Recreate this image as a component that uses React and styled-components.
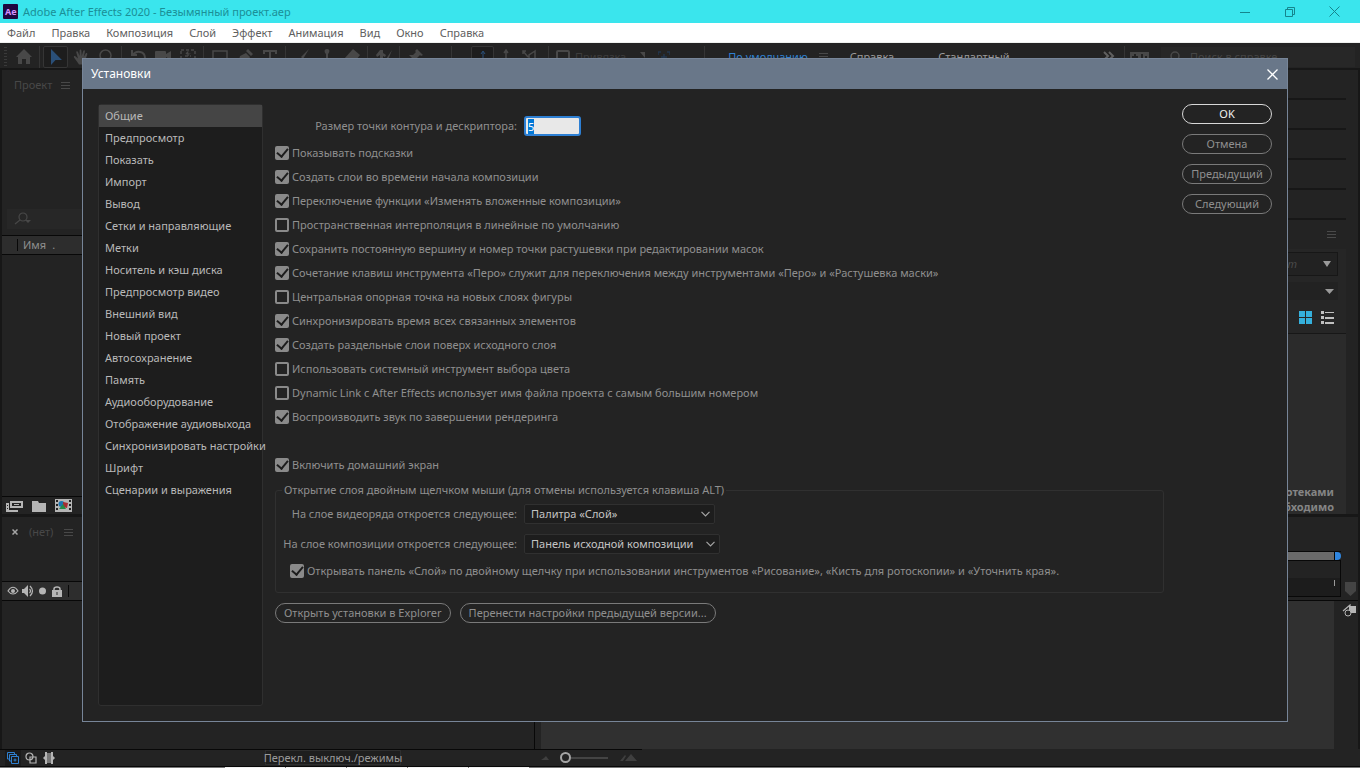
import React, { useEffect, useRef } from 'react';
import styled, { createGlobalStyle } from 'styled-components';

const GlobalStyle = createGlobalStyle`
  * {
    box-sizing: border-box;
  }
  body {
    margin: 0;
    background: #232323;
    color: #8f8f8f;
    font-family: "Noto Sans", "Open Sans", sans-serif;
    font-size: 11px;
    line-height: 16px;
  }
  button, input, select {
    font: inherit;
    color: inherit;
    margin: 0;
  }
  svg {
    display: block;
    flex: none;
  }
`;

const Page = styled.div`
  position: relative;
  display: flex;
  flex-direction: column;
  min-height: 100vh;
  overflow: hidden;
`;

/* window chrome */

const TitleBar = styled.header`
  display: flex;
  align-items: center;
  height: 23px;
  padding-left: 3px;
  background: #3ae5ed;
  color: #1b8f97;
`;

const WindowTitle = styled.span`
  flex: 1;
  padding-left: 5px;
`;

const WindowButton = styled.button`
  display: flex;
  align-items: center;
  justify-content: center;
  width: 45px;
  height: 20px;
  padding: 0;
  border: 0;
  background: none;
  color: ${props => props.$light ? '#fff' : '#15858d'};
`;

const MenuBar = styled.nav`
  display: flex;
  height: 20px;
  padding-left: 7px;
  gap: 16px;
  border-bottom: 1px solid #eef0ee;
  background: #fff;
  line-height: 20px;
  a {
    color: #606060;
    text-decoration: none;
  }
`;

/* toolbar */

const ToolBar = styled.div`
  display: flex;
  align-items: center;
  height: 25px;
  padding-top: 2px;
  flex: none;
  color: #484848;
  white-space: nowrap;
`;

const Grip = styled.div`
  width: 3px;
  height: 20px;
  margin: 0 4px 0 4px;
  background: repeating-linear-gradient(#3a3a3a 0 1px, #232323 1px 3px);
`;

const Tool = styled.button`
  display: flex;
  align-items: center;
  justify-content: center;
  flex: none;
  width: ${props => props.$narrow ? 23 : 25}px;
  height: 22px;
  padding: 0;
  border: 1px solid ${props => props.$on ? '#353535' : 'transparent'};
  border-radius: 2px;
  background: ${props => props.$on ? '#1d1d1d' : 'none'};
  color: ${props => props.$blue ? '#2a4f78' : 'inherit'};
`;

const Sep = styled.i`
  flex: none;
  width: 1px;
  height: 22px;
  margin: 0 3px;
  background: #353535;
`;

const Gap = styled.div`
  flex: none;
  width: ${props => props.$w}px;
`;

const SnapLabel = styled.label`
  display: flex;
  align-items: center;
  gap: 5px;
  padding: 0 12px 0 4px;
  color: #3c3c3c;
  input {
    appearance: none;
    width: 14px;
    height: 14px;
    border: 2px solid #484848;
    border-radius: 2px;
  }
`;

const Workspaces = styled.nav`
  flex: 1;
  display: flex;
  align-items: center;
  padding-left: 20px;
`;

const Workspace = styled.a`
  color: ${props => props.$on ? '#2f80d0' : '#9a9a9a'};
  text-decoration: none;
`;

const HelpSearch = styled.label`
  display: flex;
  align-items: center;
  gap: 10px;
  width: 194px;
  height: 20px;
  margin: 0 5px 0 12px;
  padding-left: 9px;
  background: #272727;
  input {
    width: 140px;
    padding: 0;
    border: 0;
    background: none;
  }
  input::placeholder {
    color: #444;
    opacity: 1;
  }
`;

/* panels */

const Upper = styled.div`
  display: flex;
  justify-content: space-between;
  height: 449px;
  border: solid #171717;
  border-width: 2px 2px 3px;
`;

const Project = styled.section`
  display: flex;
  flex-direction: column;
  width: 533px;
`;

const PanelTab = styled.div`
  display: flex;
  align-items: center;
  gap: ${props => props.$gap || 9}px;
  height: 30px;
  padding-left: ${props => props.$left}px;
  color: #484848;
`;

const CloseTab = styled.button`
  display: flex;
  padding: 0;
  border: 0;
  background: none;
  color: #a5a5a5;
`;

const ProjectSearch = styled.div`
  display: flex;
  align-items: center;
  height: 20px;
  margin: 109px 0 6px 5px;
  padding-left: 7px;
  background: #272727;
  color: #484848;
`;

const ColumnHead = styled.div`
  display: flex;
  align-items: center;
  height: 20px;
  border: solid #080808;
  border-width: 1px 0;
  background: #2d2d2d;
  padding-left: ${props => props.$left}px;
`;

const ColumnLine = styled.i`
  width: 1px;
  height: 12px;
  background: #080808;
  margin-right: 5px;
`;

const IconBar = styled.div`
  display: flex;
  align-items: center;
  gap: 9px;
  height: 18px;
  margin-top: auto;
  padding-left: 3px;
  border-top: 1px solid #080808;
  color: #b5b5b5;
`;

const Side = styled.aside`
  display: flex;
  flex-direction: column;
  width: 272px;
  padding-right: 12px;
`;

const Collapsed = styled.div`
  height: 30px;
  border-bottom: 2px solid #171717;
`;

const SideHead = styled.div`
  display: flex;
  justify-content: flex-end;
  align-items: center;
  height: 29px;
  padding-right: 10px;
  color: #4a4a4a;
`;

const LibraryTools = styled.div`
  display: flex;
  flex-direction: column;
  gap: 6px;
  height: 84px;
  padding: 3px 8px 0 0;
  background: #262626;
`;

const LibraryBox = styled.div`
  display: flex;
  align-items: center;
  justify-content: flex-end;
  gap: 26px;
  height: ${props => props.$framed ? 24 : 18}px;
  padding-right: ${props => props.$framed ? 6 : 4}px;
  border: ${props => props.$framed ? '1px solid #171717' : '0'};
  background: #222;
  color: #4a4a4a;
`;

const ViewIcons = styled.div`
  display: flex;
  justify-content: flex-end;
  align-items: center;
  gap: 8px;
  padding: 5px 3px 0 0;
`;

const LibraryText = styled.div`
  flex: 1;
  display: flex;
  flex-direction: column;
  justify-content: flex-end;
  border-top: 1px solid #171717;
  background: #2b2b2b;
  padding: 0 12px 0 0;
  line-height: 15px;
  font-weight: bold;
  text-align: right;
  color: #858585;
`;

const Timeline = styled.div`
  flex: 1;
  display: flex;
  border: solid #171717;
  border-width: 0 2px;
`;

const Layers = styled.section`
  display: flex;
  flex-direction: column;
  width: 533px;
  border-right: 1px solid #080808;
`;

const LayerIcons = styled.div`
  display: flex;
  align-items: center;
  gap: 3px;
  color: #b5b5b5;
  padding-right: 6px;
`;

const Tracks = styled.section`
  flex: 1;
  display: flex;
  flex-direction: column;
  padding-left: 6px;
`;

const WorkArea = styled.div`
  display: flex;
  height: 10px;
  margin: 34px 17px 0 0;
  border: solid #080808;
  border-width: 1px 0;
  background: linear-gradient(to left, #232323 6px, #6a6a6a 6px);
  justify-content: flex-end;
  i {
    width: 7px;
    border-left: 1px solid #080808;
    border-radius: 0 5px 5px 0;
    background: #2f86e0;
  }
`;

const Ruler = styled.div`
  display: flex;
  justify-content: flex-end;
  align-items: flex-end;
  gap: 4px;
  height: 40px;
  padding-right: 2px;
  border-bottom: 1px solid #080808;
  span {
    flex: 1;
    display: flex;
    justify-content: flex-end;
    align-items: center;
    height: 36px;
    padding-right: 5px;
    border: solid #080808;
    border-width: 0 1px 1px 0;
    margin-bottom: 3px;
    background: linear-gradient(#232323 50%, #1c1c1c 50%);
  }
  span i {
    width: 1px;
    height: 6px;
    margin-top: 8px;
    background: #9a9a9a;
  }
`;

const TrackArea = styled.div`
  flex: 1;
  display: flex;
  align-items: flex-start;
  > div {
    flex: 1;
    align-self: stretch;
    background: #303030;
  }
  > span {
    width: 24px;
    padding: 3px 0 0 8px;
  }
`;

const StatusBar = styled.footer`
  display: flex;
  align-items: center;
  height: 18px;
  padding-left: 5px;
  border: solid #080808;
  border-width: 0 0 1px 0;
  background: linear-gradient(to right, #080808 642px, #232323 642px) top / 100% 1px no-repeat #232323;
`;

const SwitchButton = styled.button`
  display: flex;
  align-items: center;
  justify-content: center;
  flex: none;
  height: 15px;
  width: 136px;
  margin-left: 206px;
  padding: 0;
  border: 1px solid #2e2e2e;
  background: #1e1e1e;
  line-height: 13px;
  color: #9a9a9a;
  white-space: nowrap;
`;

const StatusIcon = styled.button`
  display: flex;
  align-items: center;
  justify-content: center;
  width: 16px;
  height: 16px;
  margin-right: 2px;
  padding: 0;
  border: 0;
  background: ${props => props.$on ? '#1b1b1b' : 'none'};
  color: ${props => props.$on ? '#2f80d0' : '#b5b5b5'};
`;

const Zoom = styled.input`
  appearance: none;
  width: 48px;
  height: 11px;
  background: linear-gradient(#444, #444) center / 100% 2px no-repeat;
  &::-webkit-slider-thumb {
    appearance: none;
    width: 11px;
    height: 11px;
    border: 2px solid #a5a5a5;
    border-radius: 50%;
    background: #232323;
  }
`;

const BottomEdge = styled.div`
  display: flex;
  height: 1px;
  background: #777;
  i {
    width: 60px;
    margin-right: 1px;
    background: #f2f2f2;
  }
`;

/* preferences dialog */

const Overlay = styled.div`
  position: absolute;
  inset: 0;
  display: flex;
  padding: 58px 72px 46px 82px;
`;

const Dialog = styled.form`
  flex: 1;
  display: flex;
  flex-direction: column;
  border: 1px solid #778598;
  background: #232323;
`;

const DialogTitle = styled.div`
  display: flex;
  align-items: center;
  justify-content: space-between;
  height: 30px;
  padding: 0 0 0 8px;
  background: #697789;
  color: #fff;
  font-size: 12px;
  h1 {
    margin: 0;
    font-size: inherit;
    font-weight: normal;
  }
  button {
    width: 30px;
  }
`;

const DialogBody = styled.div`
  flex: 1;
  display: flex;
  padding: 15px;
`;

const Categories = styled.ul`
  width: 165px;
  margin: 0 12px 0 0;
  padding: 0;
  border: 1px solid #2f2f2f;
  border-radius: 3px;
  background: #1d1d1d;
  list-style: none;
`;

const Category = styled.button`
  display: block;
  width: 100%;
  height: 22px;
  padding: 0 0 0 6px;
  border: 0;
  background: ${props => props.$on ? '#454545' : 'none'};
  color: #b9b9b9;
  text-align: left;
  white-space: nowrap;
`;

const Settings = styled.div`
  flex: 1;
  padding-top: 12px;
`;

const Field = styled.div`
  display: flex;
  align-items: center;
  gap: 7px;
  height: 20px;
  margin-bottom: ${props => props.$below}px;
  label {
    display: flex;
    justify-content: flex-end;
    width: ${props => props.$label}px;
    white-space: nowrap;
  }
`;

const SizeInput = styled.input`
  width: 57px;
  height: 20px;
  padding: 0 2px;
  border: 2px solid #2d7fd3;
  border-radius: 3px;
  outline: none;
  background: #e8e8e8;
  color: #222;
  line-height: 14px;
  &::selection {
    background: #0078d7;
    color: #fff;
  }
`;

const Check = styled.label`
  display: flex;
  align-items: center;
  gap: 3px;
  height: 24px;
  margin-top: ${props => props.$spaced ? 24 : 0}px;
  white-space: nowrap;
  input {
    appearance: none;
    display: flex;
    justify-content: center;
    align-items: center;
    width: 14px;
    height: 14px;
    border: 2px solid #8a8a8a;
    border-radius: 2px;
  }
  input:checked {
    background: #8a8a8a;
  }
  input:checked::after {
    content: '';
    flex: none;
    width: 5px;
    height: 9px;
    margin-bottom: 3px;
    border: solid #1d1d1d;
    border-width: 0 2px 2px 0;
    transform: rotate(40deg);
  }
`;

const Group = styled.fieldset`
  margin: 6px 0 10px;
  padding: 7px 14px 9px;
  border: 1px solid #303030;
  border-radius: 3px;
  legend {
    margin-left: -8px;
    padding: 0 2px;
    line-height: 14px;
  }
`;

const SelectBox = styled.div`
  display: grid;
  align-items: center;
  justify-items: end;
  width: ${props => props.$w}px;
  color: #a5a5a5;
  select, svg {
    grid-area: 1 / 1;
  }
  svg {
    margin-right: 5px;
    pointer-events: none;
  }
  select {
    appearance: none;
    width: 100%;
    height: 20px;
    padding: 0 6px;
    border: 1px solid #303030;
    border-radius: 2px;
    background: #1d1d1d;
    color: #c4c4c4;
  }
`;

const Buttons = styled.div`
  display: flex;
  flex-direction: ${props => props.$column ? 'column' : 'row'};
  gap: ${props => props.$column ? 10 : 9}px;
  width: ${props => props.$column ? '90px' : 'auto'};
  margin-left: ${props => props.$column ? 18 : 0}px;
`;

const Pill = styled.button`
  height: 20px;
  padding: 0 8px;
  border: ${props => props.$main ? '1px solid #d8d8d8' : '1px solid #7a7a7a'};
  border-radius: 10px;
  background: none;
  color: ${props => props.$main ? '#f0f0f0' : '#8f8f8f'};
  line-height: 16px;
  white-space: nowrap;
`;

const Icon = ({ w = 16, h = 16, children, ...rest }) => (
  <svg width={w} height={h} viewBox={`0 0 ${w} ${h}`} fill="currentColor" {...rest}>
    {children}
  </svg>
);

const line = { fill: 'none', stroke: 'currentColor', strokeWidth: 1.5 };

const Burger = () => (
  <Icon w={9} h={9}>
    <path d="M0 1h9v1H0zM0 4h9v1H0zM0 7h9v1H0z" />
  </Icon>
);

const tools = [
  [
    ['Выделение', <path d="M3 0v16l4.500-5H14z" />],
    ['Рука', <path d="M5 14L1 8.500c-.8-1.300.8-2 1.600-1L5 9.500 3.300 3.500c-.3-1.300 1.300-1.600 1.700-.4L6.600 7V1.400c0-1.300 1.700-1.300 1.800 0L8.700 7l1.500-5c.4-1.200 2-.8 1.700.5L10.700 8l2-3.500c.7-1 2-.3 1.500.9L12 12l-1.500 3.500H6z" />],
    ['Масштаб', <path {...line} d="M2 6.500a5.500 5.500 0 1 0 11 0a5.500 5.500 0 1 0-11 0M11 11l4 4" />],
  ],
  [
    ['Поворот', <path {...line} strokeWidth="2" d="M2 1v5h5M3 6c3-5 12-4 12 3 0 4-3 5-5 5" />],
    ['Камера', <path d="M0 3q0-1 1-1h9q1 0 1 1v2l5-3v9l-5-3v6H0z" />],
    ['Опорная точка', <path {...line} strokeDasharray="3 2" d="M1 1h14v13H1zM8 4v8M5 7h6M6 5l2-2 2 2" />],
  ],
  [
    ['Прямоугольник', <path {...line} d="M1 2h14v12H1z" />],
    ['Перо', <path d="M1 15l2-8 6-3 4 4-3 6-8 2 4-5zM9 2l2-2 5 5-2 2z" />],
    ['Текст', <path d="M1 1h14v4h-2V3H9v11h2v2H5v-2h2V3H3v2H1z" />],
  ],
  [
    ['Кисть', <path d="M15 0L7 8l2 2zM6 9l2 2c0 3-3 5-7 4 3-1 2-5 5-6z" />],
    ['Штамп', <path d="M8 0c3 0 3 3 1 5v4h5v3H2v-3h5V5C5 3 5 0 8 0zM2 14h12v2H2z" />],
    ['Ластик', <path d="M9 0l7 6-7 9H5L0 10z" />],
  ],
  [['Ротоскопия', <path d="M4 1h3v3l3 2-1 2-2-1v3l2 5H7l-2-4-3 4-2-1 4-5V6L1 8 0 6zM16 1l-6 9c-2 0-2 3-3 4 3 0 5-1 5-3z" />]],
  [['Марионетка', <path d="M9 0l6 6-2 1-1-1-3 3v4L5 10l-5 5 4-6-3-3h4l3-3-1-1z" />]],
];

const menu = ['Файл', 'Правка', 'Композиция', 'Слой', 'Эффект', 'Анимация', 'Вид', 'Окно', 'Справка'];

const categories = [
  'Общие',
  'Предпросмотр',
  'Показать',
  'Импорт',
  'Вывод',
  'Сетки и направляющие',
  'Метки',
  'Носитель и кэш диска',
  'Предпросмотр видео',
  'Внешний вид',
  'Новый проект',
  'Автосохранение',
  'Память',
  'Аудиооборудование',
  'Отображение аудиовыхода',
  'Синхронизировать настройки',
  'Шрифт',
  'Сценарии и выражения',
];

const options = [
  ['Показывать подсказки', true],
  ['Создать слои во времени начала композиции', true],
  ['Переключение функции «Изменять вложенные композиции»', true],
  ['Пространственная интерполяция в линейные по умолчанию', false],
  ['Сохранить постоянную вершину и номер точки растушевки при редактировании масок', true],
  ['Сочетание клавиш инструмента «Перо» служит для переключения между инструментами «Перо» и «Растушевка маски»', true],
  ['Центральная опорная точка на новых слоях фигуры', false],
  ['Синхронизировать время всех связанных элементов', true],
  ['Создать раздельные слои поверх исходного слоя', true],
  ['Использовать системный инструмент выбора цвета', false],
  ['Dynamic Link с After Effects использует имя файла проекта с самым большим номером', false],
  ['Воспроизводить звук по завершении рендеринга', true],
];

const Checkbox = ({ text, on, spaced }) => (
  <Check $spaced={spaced}>
    <input type="checkbox" defaultChecked={on} />
    {text}
  </Check>
);

const Dropdown = ({ id, label, below, width, value }) => (
  <Field $label={227} $below={below}>
    <label htmlFor={id}>{label}</label>
    <SelectBox $w={width}>
      <select id={id}>
        <option>{value}</option>
      </select>
      <Icon w={9} h={6}>
        <path {...line} strokeWidth="1.2" d="M.5.8l4 4 4-4" />
      </Icon>
    </SelectBox>
  </Field>
);

const Top = () => (
  <>
    <TitleBar>
      <Icon w={15} h={15}>
        <rect width="15" height="15" rx="1" fill="#1f0740" />
        <text x="2" y="11" fontSize="9" fontWeight="bold" fill="#d291ff">Ae</text>
      </Icon>
      <WindowTitle>Adobe After Effects 2020 - Безымянный проект.aep</WindowTitle>
      <WindowButton aria-label="Свернуть">
        <Icon w={10} h={10}><path d="M0 5h10v1H0z" /></Icon>
      </WindowButton>
      <WindowButton aria-label="Восстановить">
        <Icon w={10} h={10}><path {...line} strokeWidth="1" d="M.5 2.500h7v7h-7zM2.500 2.500v-2h7v7h-2" /></Icon>
      </WindowButton>
      <WindowButton aria-label="Закрыть">
        <Icon w={11} h={11}><path {...line} strokeWidth="1" d="M.5.5l10 10M10.500.5l-10 10" /></Icon>
      </WindowButton>
      <Gap $w={3} />
    </TitleBar>
    <MenuBar>
      {menu.map(item => <a href="#menu" key={item}>{item}</a>)}
    </MenuBar>
    <ToolBar>
      <Grip />
      <Tool aria-label="Домой">
        <Icon><path d="M8 0l8 8h-2v7h-4v-5H6v5H2V8H0z" /></Icon>
      </Tool>
      {tools.map((group, index) => (
        <React.Fragment key={index}>
          <Sep />
          {group.map(([name, shape]) => (
            <Tool key={name} aria-label={name} $on={name === 'Выделение'} $blue={name === 'Выделение'}>
              <Icon>{shape}</Icon>
            </Tool>
          ))}
        </React.Fragment>
      ))}
      <Gap $w={20} />
      <Sep />
      <Gap $w={16} />
      <Tool aria-label="Локальные оси" $narrow $on $blue>
        <Icon><path {...line} strokeWidth="1" d="M8 14V3M6 5l2-3 2 3M8 11l-4 3M8 11l4 3" /></Icon>
      </Tool>
      <Tool aria-label="Мировые оси" $narrow>
        <Icon><path {...line} d="M8 10V2M6 4l2-3 2 3M8 9l-4 5M8 9l4 5" /></Icon>
      </Tool>
      <Tool aria-label="Оси вида" $narrow>
        <Icon><path {...line} d="M2 5V2h3M2 2l5 6M14 2L8 6v5l6 3z" /></Icon>
      </Tool>
      <Gap $w={5} />
      <Sep />
      <SnapLabel>
        <input type="checkbox" />
        Привязка
      </SnapLabel>
      <Icon w={12} h={14}><path d="M2 2h5v6zM0 11l3-3v3z" /></Icon>
      <Gap $w={8} />
      <Icon w={12} h={14} color="#22364d"><path {...line} d="M0 5V2h3M9 2h3v3M6 4v6M3 7h6" /></Icon>
      <Gap $w={31} />
      <Sep />
      <Workspaces>
        <Workspace href="#default" $on>По умолчанию</Workspace>
        <Gap $w={11} />
        <Burger />
        <Gap $w={22} />
        <Workspace href="#help">Справка</Workspace>
        <Gap $w={44} />
        <Workspace href="#standard">Стандартный</Workspace>
      </Workspaces>
      <Icon w={12} h={12} color="#606060"><path {...line} strokeWidth="2" d="M1 1l4 4-4 4M6 1l4 4-4 4" /></Icon>
      <Gap $w={6} />
      <Sep />
      <Gap $w={2} />
      <Icon w={19} h={14}><path fillRule="evenodd" d="M0 2h19v10H0zM4 4v2H2v2h2v2h2V8h2V6H6V4zM11 4v4h2V4zM15 6v4h2V6z" /></Icon>
      <HelpSearch>
        <Icon w={10} h={12}><path {...line} d="M1 5a4 4 0 1 0 8 0a4 4 0 1 0-8 0M3 8l-2 3" /></Icon>
        <input aria-label="Поиск в справке" placeholder="Поиск в справке" />
      </HelpSearch>
    </ToolBar>
  </>
);

const UpperPanels = () => (
  <Upper>
    <Project>
      <PanelTab $left={12}>Проект <Burger /></PanelTab>
      <ProjectSearch>
        <Icon w={18} h={14}>
          <path {...line} strokeWidth="1.2" d="M5 5a4 4 0 1 0 8 0a4 4 0 1 0-8 0M6 8l-5 4" />
          <path d="M11 8h6l-3 3z" />
        </Icon>
      </ProjectSearch>
      <ColumnHead $left={15}>
        <ColumnLine />
        Имя
        <Gap $w={6} />
        .
      </ColumnHead>
      <IconBar>
        <Icon w={18} h={14}>
          <path fillRule="evenodd" d="M5 2h13v7H5zM7 4v3h9V4zM9 5h5v1H9zM1 4h3v7h9v2H1zM2 6v1h1V6zM2 9v1h1V9z" />
        </Icon>
        <Icon w={14} h={12}><path d="M0 1h6l1 2h7v9H0z" /></Icon>
        <Icon w={17} h={13}>
          <path fillRule="evenodd" d="M0 0h17v13H0zM1 1v2h2V1zM1 5v2h2V5zM1 9v2h2V9zM14 1v2h2V1zM14 5v2h2V5zM14 9v2h2V9z" />
          <circle cx="6.500" cy="5" r="3" fill="#1b73b0" />
          <path d="M8 3l5 1-1 5-4-1z" fill="#a62c32" />
          <path d="M4 10l4-5 3 5z" fill="#238a48" />
        </Icon>
      </IconBar>
    </Project>
    <Side>
      {[1, 2, 3, 4, 5].map(n => <Collapsed key={n} />)}
      <SideHead><Burger /></SideHead>
      <LibraryTools>
        <LibraryBox $framed>
          <em>импорт</em>
          <Icon w={8} h={6}><path fill="#9a9a9a" d="M0 0h8L4 6z" /></Icon>
        </LibraryBox>
        <LibraryBox>
          <Icon w={9} h={5}><path fill="#9a9a9a" d="M0 0h9L4.500 5z" /></Icon>
        </LibraryBox>
        <ViewIcons>
          <Icon w={14} h={14} color="#35b0dc"><path d="M0 0h6v6H0zM7 0h6v6H7zM0 7h6v6H0zM7 7h6v6H7z" /></Icon>
          <Icon w={14} h={14} color="#c0c0c0"><path d="M0 0h3v3H0zM0 5h3v3H0zM0 10h3v3H0zM4 1h9v1H4zM4 6h9v2H4zM4 11h9v2H4z" /></Icon>
        </ViewIcons>
      </LibraryTools>
      <LibraryText>
        <span>Для работы с библиотеками</span>
        <span>необходимо</span>
      </LibraryText>
    </Side>
  </Upper>
);

const TimelinePanel = () => (
  <>
    <Timeline>
      <Layers>
        <PanelTab $left={10} $gap={11}>
          <CloseTab aria-label="Закрыть вкладку">
            <Icon w={6} h={6}><path {...line} d="M.5.5l5 5M5.500.5l-5 5" /></Icon>
          </CloseTab>
          (нет)
          <Burger />
        </PanelTab>
        <Gap style={{ height: 34 }} />
        <ColumnHead $left={5}>
          <LayerIcons>
            <Icon w={12} h={10}>
              <path {...line} strokeWidth="1.200" d="M1 5c3-5 7-5 10 0-3 4-7 4-10 0z" />
              <circle cx="6" cy="5" r="2" />
            </Icon>
            <Icon w={12} h={12}>
              <path d="M0 4h2l4-4v12L2 8H0z" />
              <path {...line} strokeWidth="1.200" d="M7.500 4q2 2 0 4M8 1q5 5 0 10" />
            </Icon>
            <Icon w={12} h={12}><circle cx="5.500" cy="6" r="3.500" /></Icon>
            <Icon w={10} h={11}>
              <path fillRule="evenodd" d="M0 4h10v7H0zM4.500 6v3h1V6z" />
              <path {...line} d="M2 5V3q0-2 3-2t3 2v2" />
            </Icon>
          </LayerIcons>
          <ColumnLine />
        </ColumnHead>
      </Layers>
      <Tracks>
        <WorkArea><i /></WorkArea>
        <Ruler>
          <span><i /></span>
          <Icon w={11} h={18}><path fill="#444" d="M0 0h11v9l-5.500 5L0 9z" /></Icon>
        </Ruler>
        <TrackArea>
          <div />
          <span>
            <Icon w={14} h={13} color="#b5b5b5">
              <path d="M7 2h7v7H7z" />
              <path {...line} strokeWidth="1.200" d="M1 7l7-6v7" />
              <circle cx="6" cy="9" r="3" fill="#232323" stroke="currentColor" />
            </Icon>
          </span>
        </TrackArea>
      </Tracks>
    </Timeline>
    <StatusBar>
      <StatusIcon aria-label="Слои" $on>
        <Icon w={12} h={12}><path {...line} strokeWidth="1" d="M3 7H.5V.5h7V3M5 9H2.500V2.500h7V5M4.500 4.500h7v7h-7zM8 6.500v3M6.500 8h3" /></Icon>
      </StatusIcon>
      <StatusIcon aria-label="Режимы">
        <Icon w={12} h={12}><path {...line} strokeWidth="1.200" d="M1 4.500a3.500 3.500 0 1 0 7 0a3.500 3.500 0 1 0-7 0M5 5h6v6H5z" /></Icon>
      </StatusIcon>
      <StatusIcon aria-label="Точки">
        <Icon w={12} h={12}><path d="M2 0h2v12H2V8L0 6l2-2zM8 0h2v4l2 2-2 2v4H8z" /><path fill="#777" d="M4 1h4v10H4z" /></Icon>
      </StatusIcon>
      <SwitchButton>Перекл. выключ./режимы</SwitchButton>
      <Gap $w={140} />
      <Icon w={8} h={4}><path fill="#3f3f3f" d="M0 4l3-2 2-2 3 4z" /></Icon>
      <Gap $w={11} />
      <Zoom type="range" aria-label="Масштаб времени" defaultValue={0} />
      <Gap $w={12} />
      <Icon w={17} h={7}><path fill="#3f3f3f" d="M0 7l5-6 1 1-3 5zM5 7l6-7 6 7z" /></Icon>
    </StatusBar>
    <BottomEdge>
      <Gap $w={225} />
      {[1, 2, 3, 4, 5].map(n => <i key={n} />)}
    </BottomEdge>
  </>
);

const Preferences = () => {
  const size = useRef(null);

  useEffect(() => {
    size.current.focus();
    size.current.select();
  }, []);

  return (
    <Overlay>
      <Dialog role="dialog" aria-labelledby="prefs-title" onSubmit={e => e.preventDefault()}>
        <DialogTitle>
          <h1 id="prefs-title">Установки</h1>
          <WindowButton type="button" aria-label="Закрыть" $light>
            <Icon w={11} h={11}><path {...line} strokeWidth="1.300" d="M.5.5l10 10M10.500.5l-10 10" /></Icon>
          </WindowButton>
        </DialogTitle>
        <DialogBody>
          <Categories>
            {categories.map((name, index) => (
              <li key={name}>
                <Category type="button" $on={index === 0}>{name}</Category>
              </li>
            ))}
          </Categories>
          <Settings>
            <Field $label={242} $below={5}>
              <label htmlFor="point-size">Размер точки контура и дескриптора:</label>
              <SizeInput id="point-size" ref={size} defaultValue="5" />
            </Field>
            {options.map(([text, on]) => <Checkbox key={text} text={text} on={on} />)}
            <Checkbox text="Включить домашний экран" on spaced />
            <Group>
              <legend>Открытие слоя двойным щелчком мыши (для отмены используется клавиша ALT)</legend>
              <Dropdown
                id="footage"
                label="На слое видеоряда откроется следующее:"
                below={10}
                width={191}
                value="Палитра «Слой»"
              />
              <Dropdown
                id="comp"
                label="На слое композиции откроется следующее:"
                below={5}
                width={196}
                value="Панель исходной композиции"
              />
              <Checkbox text="Открывать панель «Слой» по двойному щелчку при использовании инструментов «Рисование», «Кисть для ротоскопии» и «Уточнить края»." on />
            </Group>
            <Buttons>
              <Pill type="button">Открыть установки в Explorer</Pill>
              <Pill type="button">Перенести настройки предыдущей версии...</Pill>
            </Buttons>
          </Settings>
          <Buttons $column>
            <Pill $main>OK</Pill>
            <Pill type="button">Отмена</Pill>
            <Pill type="button">Предыдущий</Pill>
            <Pill type="button">Следующий</Pill>
          </Buttons>
        </DialogBody>
      </Dialog>
    </Overlay>
  );
};

const App = () => (
  <Page>
    <GlobalStyle />
    <Top />
    <UpperPanels />
    <TimelinePanel />
    <Preferences />
  </Page>
);

export default App;
